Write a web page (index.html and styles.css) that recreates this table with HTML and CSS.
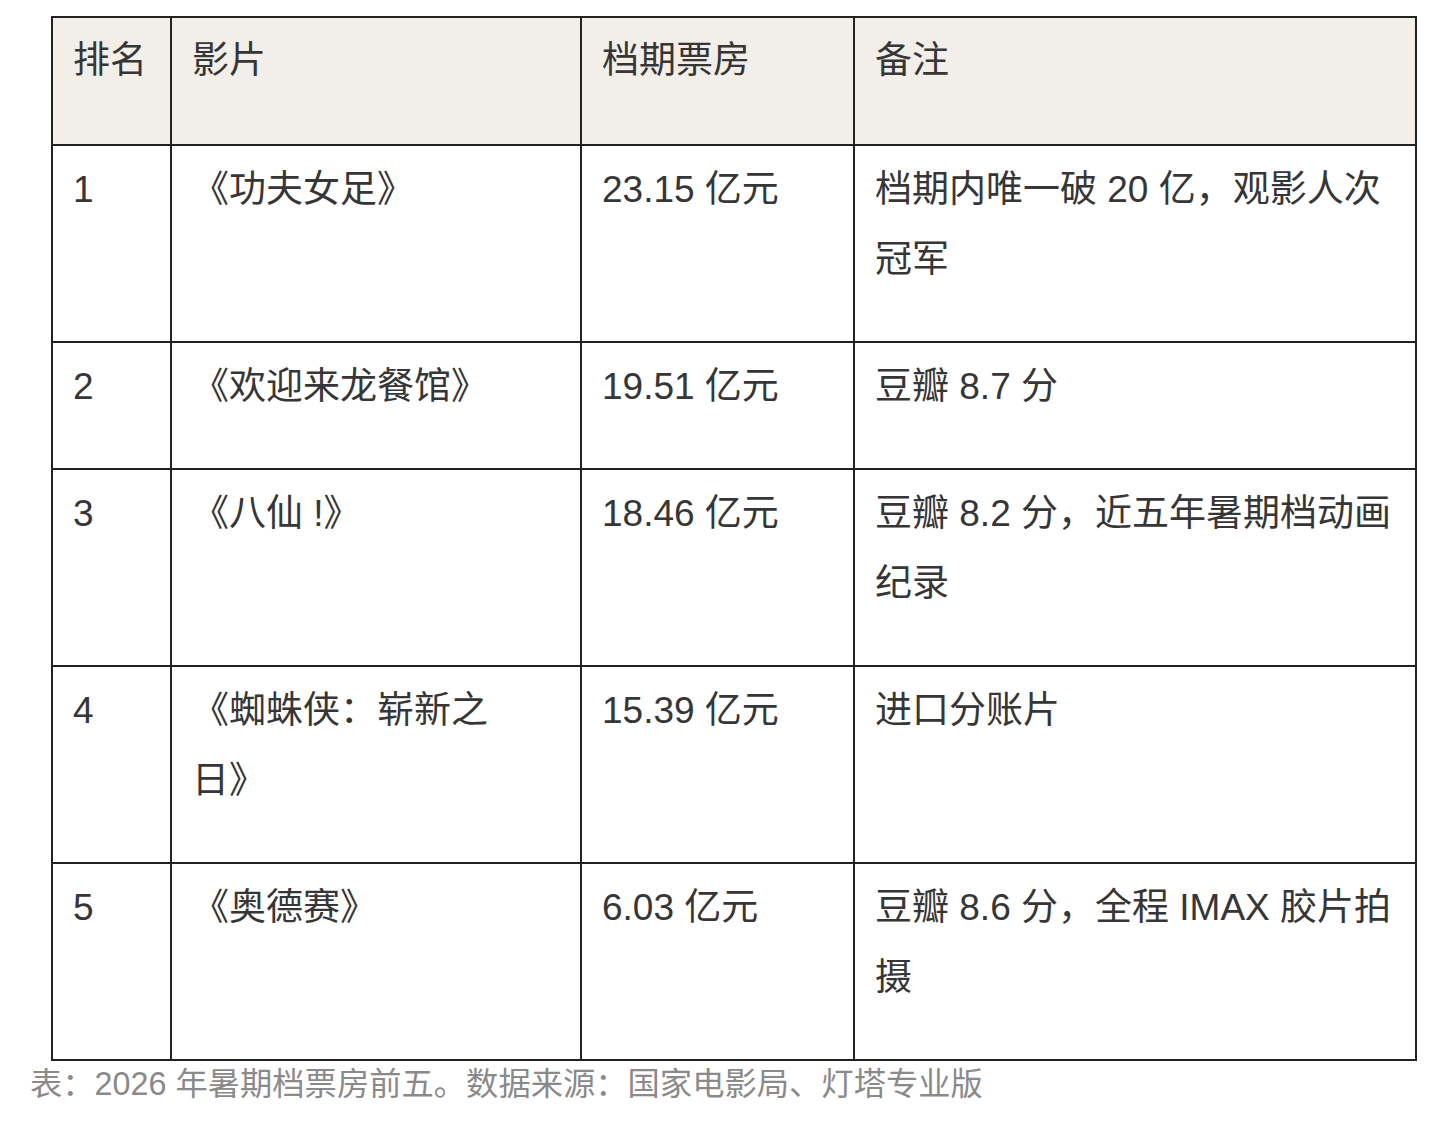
FILE: index.html
```html
<!DOCTYPE html>
<html lang="zh-CN">
<head>
<meta charset="utf-8">
<title>2026 年暑期档票房前五</title>
<link rel="stylesheet" href="styles.css">
</head>
<body>
<figure class="figure">
  <table class="box-table">
    <colgroup>
      <col class="c-rank">
      <col class="c-film">
      <col class="c-gross">
      <col class="c-note">
    </colgroup>
    <thead>
      <tr>
        <th>排名</th>
        <th>影片</th>
        <th>档期票房</th>
        <th>备注</th>
      </tr>
    </thead>
    <tbody>
      <tr>
        <td>1</td>
        <td>《功夫女足》</td>
        <td>23.15 亿元</td>
        <td>档期内唯一破 20 亿，观影人次冠军</td>
      </tr>
      <tr>
        <td>2</td>
        <td>《欢迎来龙餐馆》</td>
        <td>19.51 亿元</td>
        <td>豆瓣 8.7 分</td>
      </tr>
      <tr>
        <td>3</td>
        <td>《八仙 !》</td>
        <td>18.46 亿元</td>
        <td>豆瓣 8.2 分，近五年暑期档动画纪录</td>
      </tr>
      <tr>
        <td>4</td>
        <td>《蜘蛛侠：崭新之日》</td>
        <td>15.39 亿元</td>
        <td>进口分账片</td>
      </tr>
      <tr>
        <td>5</td>
        <td>《奥德赛》</td>
        <td>6.03 亿元</td>
        <td>豆瓣 8.6 分，全程 IMAX 胶片拍摄</td>
      </tr>
    </tbody>
  </table>
  <figcaption class="caption">表：2026 年暑期档票房前五。数据来源：国家电影局、灯塔专业版</figcaption>
</figure>
</body>
</html>
```

FILE: styles.css
```css
html, body {
  margin: 0;
  padding: 0;
  background: #ffffff;
}

body {
  font-family: "Liberation Sans", "Noto Sans CJK SC", sans-serif;
  color: #363636;
}

.figure {
  margin: 0;
  padding: 16px 0 0 30px;
}

.box-table {
  margin-left: 21px;
  width: 1366px;
  table-layout: fixed;
  border-collapse: collapse;
  font-size: 37px;
  line-height: 70px;
}

.c-rank { width: 119px; }
.c-film { width: 410px; }
.c-gross { width: 273px; }
.c-note { width: 562px; }

.box-table th,
.box-table td {
  border: 2px solid #222222;
  padding: 9px 15px 46px 20px;
  text-align: left;
  vertical-align: top;
  font-weight: normal;
}

.box-table th {
  background: #f2efe9;
  padding-top: 8px;
  padding-bottom: 48px;
}

.box-table td:nth-child(2),
.box-table th:nth-child(2) {
  padding-right: 60px;
}

.caption {
  margin: 3px 0 0 0;
  font-size: 32.3px;
  line-height: 40px;
  color: #8a8a8a;
}
```
